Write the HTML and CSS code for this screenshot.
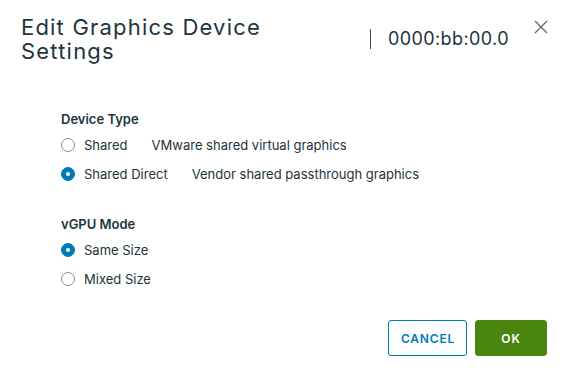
FILE: index.html
```html
<!DOCTYPE html>
<html lang="en">
<head>
    <meta charset="UTF-8">
    <meta name="viewport" content="width=device-width, initial-scale=1.0">
    <title>Edit Graphics Device Settings</title>
    <link rel="stylesheet" href="styles.css">
</head>
<body>

<div class="modal">
    <header class="modal-header">
        <h1 class="modal-title">Edit Graphics Device Settings</h1>
        <div class="device-id">0000:bb:00.0</div>
        <button class="close" type="button" aria-label="Close">
            <svg width="14" height="14" viewBox="0 0 14 14">
                <path d="M1 1 L13 13 M13 1 L1 13" stroke="#5a6a72" stroke-width="1.3" fill="none"/>
            </svg>
        </button>
    </header>

    <div class="modal-body">
        <div class="field">
            <h3>Device Type</h3>
            <label class="radio">
                <span class="dot"></span>
                <span class="name">Shared</span>
                <span class="desc">VMware shared virtual graphics</span>
            </label>
            <label class="radio">
                <span class="dot checked"></span>
                <span class="name">Shared Direct</span>
                <span class="desc">Vendor shared passthrough graphics</span>
            </label>
        </div>

        <div class="field">
            <h3>vGPU Mode</h3>
            <label class="radio">
                <span class="dot checked"></span>
                <span class="name">Same Size</span>
            </label>
            <label class="radio">
                <span class="dot"></span>
                <span class="name">Mixed Size</span>
            </label>
        </div>
    </div>

    <div class="modal-footer">
        <button type="button" class="btn btn-outline">Cancel</button>
        <button type="button" class="btn btn-success">OK</button>
    </div>
</div>

</body>
</html>
```

FILE: styles.css
```css
body, h1, h3, button {
    margin: 0;
    padding: 0;
}

body {
    background: #fff;
    font-family: Inter, "Open Sans", sans-serif;
    color: #22343c;
}

.modal {
    width: 568px;
    height: 378px;
    box-sizing: border-box;
}

.modal-header {
    display: flex;
    align-items: flex-start;
    padding: 15px 20px 0 21px;
}

.modal-title {
    width: 320px;
    font-size: 22px;
    line-height: 24px;
    font-weight: 400;
    letter-spacing: 1.2px;
    color: #22343c;
}

.device-id {
    margin-left: 29px;
    margin-top: 14px;
    padding-left: 17px;
    border-left: 1px solid #3b4a52;
    font-size: 18px;
    line-height: 20px;
    letter-spacing: 0.4px;
}

.close {
    margin-left: auto;
    margin-top: 5px;
    background: none;
    border: none;
    width: 14px;
    height: 14px;
    cursor: pointer;
}

.modal-body {
    padding: 47px 0 0 61px;
}

.field {
    margin-bottom: 27px;
}

.field h3 {
    font-size: 13px;
    line-height: 18px;
    font-weight: 600;
    margin-bottom: 2px;
}

.radio {
    display: flex;
    align-items: center;
    height: 29px;
    font-size: 13px;
}

.dot {
    width: 14px;
    height: 14px;
    border: 1px solid #8c8c8c;
    border-radius: 50%;
    box-sizing: border-box;
    margin-right: 9px;
    position: relative;
}

.dot.checked {
    background: #0079b8;
    border-color: #0079b8;
}

.dot.checked::after {
    content: "";
    position: absolute;
    left: 4px;
    top: 4px;
    width: 4px;
    height: 4px;
    border-radius: 50%;
    background: #fff;
}

.desc {
    margin-left: 24px;
}

.modal-footer {
    display: flex;
    justify-content: flex-end;
    gap: 8px;
    padding: 0 21px 0 0;
    margin-top: 0;
}

.btn {
    height: 36px;
    padding: 0 12px;
    border-radius: 3px;
    font-family: inherit;
    font-size: 12px;
    font-weight: 600;
    letter-spacing: 0.8px;
    text-transform: uppercase;
    cursor: pointer;
}

.btn-outline {
    width: 79px;
    background: #fff;
    color: #0079b8;
    border: 1px solid #0079b8;
}

.btn-success {
    width: 72px;
    background: #4a860f;
    color: #fff;
    border: 1px solid #4a860f;
}
```
